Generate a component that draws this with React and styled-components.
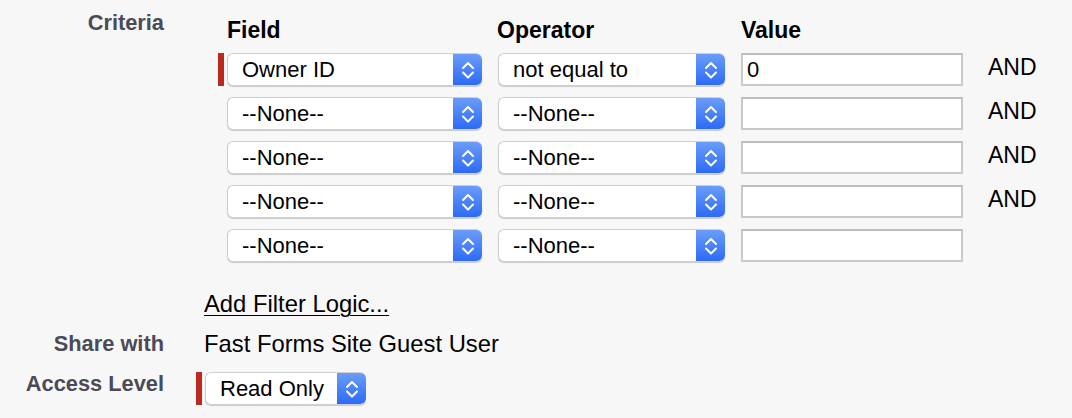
import React from "react";
import styled, { createGlobalStyle } from "styled-components";

const Global = createGlobalStyle`
  html, body { margin: 0; padding: 0; background: #f7f7f7; }
  body { font-family: "Liberation Sans", Arial, Helvetica, sans-serif; color: #000; }
`;

const Page = styled.div`
  width: 1072px;
  height: 418px;
  background: #f7f7f7;
  overflow: hidden;
`;

const FormRow = styled.div`
  display: grid;
  grid-template-columns: 164px 1fr;
  column-gap: 32px;
  align-items: start;
  margin-top: ${(p) => p.$top || 0}px;
`;

const Label = styled.div`
  font-size: 21.8px;
  font-weight: bold;
  line-height: 24px;
  color: #4b4b56;
  text-align: right;
  padding-top: ${(p) => p.$pad || 0}px;
`;

const Criteria = styled.div`
  margin-left: 22px;
  padding-top: 17px;
`;

const HeaderRow = styled.div`
  display: flex;
  padding-left: 9px;
  height: 26px;
  align-items: center;
  margin-bottom: 10px;
`;

const Header = styled.div`
  width: ${(p) => p.$w}px;
  font-size: 23px;
  font-weight: bold;
  line-height: 26px;
`;

const Rows = styled.div`
  display: flex;
  flex-direction: column;
  gap: 11px;
`;

const Row = styled.div`
  display: flex;
  align-items: center;
  height: 33px;
`;

const Marker = styled.div`
  width: 6px;
  height: 33px;
  margin-right: 3px;
  background: ${(p) => (p.$on ? "#bc2a1f" : "transparent")};
  flex: none;
`;

const SelectBox = styled.div`
  width: ${(p) => p.$w}px;
  height: 33px;
  box-sizing: border-box;
  display: flex;
  align-items: stretch;
  background: #fff;
  border: 1px solid #cfcfcf;
  border-right: none;
  border-radius: 6px;
  box-shadow: 0 1px 1px rgba(0, 0, 0, 0.18);
  margin-right: ${(p) => p.$mr || 0}px;
  flex: none;
  overflow: hidden;
`;

const SelectText = styled.div`
  flex: 1;
  padding-left: 14px;
  font-size: 22px;
  line-height: 31px;
  white-space: nowrap;
`;

const Stepper = styled.div`
  width: 29px;
  margin-top: -1px;
  margin-bottom: -1px;
  background: linear-gradient(#6c9ef9, #2a69f5);
  border-radius: 0 6px 6px 0;
  display: flex;
  align-items: center;
  justify-content: center;
`;

const TextInput = styled.div`
  width: 222px;
  height: 33px;
  box-sizing: border-box;
  background: #fff;
  border: 2px solid #c9c9c9;
  border-top-color: #bdbdbd;
  font-size: 22px;
  line-height: 29px;
  padding-left: 4px;
  flex: none;
`;

const Conj = styled.div`
  margin-left: 25px;
  font-size: 23px;
  line-height: 26px;
  margin-top: -6px;
`;

const LinkText = styled.a`
  display: inline-block;
  margin-left: 8px;
  font-size: 23.8px;
  line-height: 26px;
  color: #000;
  text-decoration: underline;
  text-underline-offset: 3px;
  text-decoration-thickness: 1px;
`;

const ValueText = styled.div`
  margin-left: 8px;
  font-size: 23.8px;
  line-height: 26px;
`;

const AccessCell = styled.div`
  display: flex;
  align-items: center;
`;

const Chevrons = () => (
  <svg width="14" height="22" viewBox="0 0 14 22" fill="none">
    <path d="M2 9 L7 4 L12 9" stroke="#fff" strokeWidth="2" strokeLinecap="round" strokeLinejoin="round" />
    <path d="M2 13.5 L7 18.5 L12 13.5" stroke="#fff" strokeWidth="2" strokeLinecap="round" strokeLinejoin="round" />
  </svg>
);

const Select = ({ w, mr, children }) => (
  <SelectBox $w={w} $mr={mr}>
    <SelectText>{children}</SelectText>
    <Stepper>
      <Chevrons />
    </Stepper>
  </SelectBox>
);

const rows = [
  { req: true, field: "Owner ID", op: "not equal to", value: "0", and: true },
  { field: "--None--", op: "--None--", value: "", and: true },
  { field: "--None--", op: "--None--", value: "", and: true },
  { field: "--None--", op: "--None--", value: "", and: true },
  { field: "--None--", op: "--None--", value: "", and: false },
];

export default function App() {
  return (
    <Page>
      <Global />
      <FormRow>
        <Label $pad={11}>Criteria</Label>
        <Criteria>
          <HeaderRow>
            <Header $w={270}>Field</Header>
            <Header $w={244}>Operator</Header>
            <Header>Value</Header>
          </HeaderRow>
          <Rows>
            {rows.map((r, i) => (
              <Row key={i}>
                <Marker $on={r.req} />
                <Select w={255} mr={16}>{r.field}</Select>
                <Select w={227} mr={16}>{r.op}</Select>
                <TextInput>{r.value}</TextInput>
                {r.and && <Conj>AND</Conj>}
              </Row>
            ))}
          </Rows>
        </Criteria>
      </FormRow>
      <FormRow $top={29}>
        <div />
        <div>
          <LinkText href="#">Add Filter Logic...</LinkText>
        </div>
      </FormRow>
      <FormRow $top={14}>
        <Label $pad={1}>Share with</Label>
        <ValueText>Fast Forms Site Guest User</ValueText>
      </FormRow>
      <FormRow $top={15}>
        <Label $pad={0}>Access Level</Label>
        <AccessCell>
          <Marker $on />
          <Select w={161}>Read Only</Select>
        </AccessCell>
      </FormRow>
    </Page>
  );
}
